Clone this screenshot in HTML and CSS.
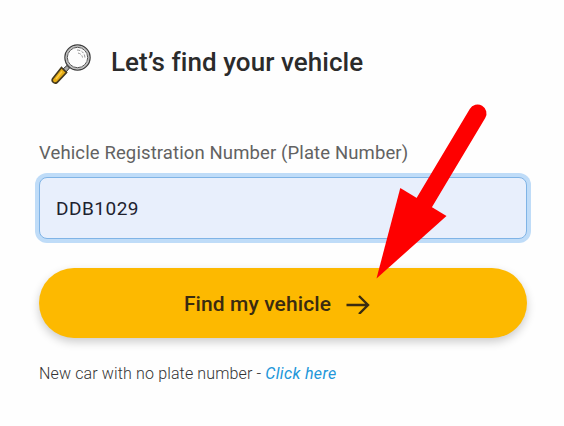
FILE: index.html
```
<!DOCTYPE html>
<html lang="en">
<head>
    <meta charset="UTF-8">
    <meta name="viewport" content="width=device-width, initial-scale=1.0">
    <title>Find my vehicle</title>
    <link rel="stylesheet" href="styles.css">
</head>
<body>

    <main class="container">
        <header class="header">
            <svg class="search-icon" width="42" height="42" viewBox="0 0 42 42">
                <path d="M12 26L15 29L18.500 25L16 22.500Z" fill="#aaa" stroke="#333" stroke-width="1"/>
                <path d="M10.500 24.500L15.500 29.500L6 39.500Q4 41 2 39Q.5 37.300 1.800 35.500Z" fill="#e5ac16" stroke="#44391e" stroke-width="1.700"/>
                <path d="M11 28.500L5 36" stroke="#ffcf45" stroke-width="1.500"/>
                <circle cx="26.500" cy="14.500" r="12.500" fill="#fff" stroke="#3b3b3b" stroke-width="1.500"/>
                <circle cx="26.500" cy="14.500" r="11.300" fill="none" stroke="#bcbcbc" stroke-width="1.400"/>
                <circle cx="26.500" cy="14.500" r="10.200" fill="#fdfdfd" stroke="#555" stroke-width="1"/>
                <path d="M26 7Q33.500 7.500 34 15M27 10Q31 11 31.500 14.500" fill="none" stroke="#888" stroke-width=".9" stroke-dasharray="3 1.500"/>
            </svg>
            <h1>Let’s find your vehicle</h1>
        </header>

        <form class="vehicle-form">
            <label class="label" for="plate">Vehicle Registration Number (Plate Number)</label>
            <input type="text" id="plate" value="DDB1029">
            <button type="button">
                <span>Find my vehicle</span>
                <svg width="24" height="20" viewBox="0 0 24 20" fill="none" stroke="#3a2b10" stroke-width="2.400">
                    <path d="M.5 11H22M13 2L22 11L13 20"/>
                </svg>
            </button>
        </form>

        <p class="new-car">New car with no plate number - <a href="#">Click here</a></p>
    </main>

    <!-- pointer laid over the form -->
    <svg class="pointer" width="564" height="426" viewBox="0 0 564 426">
        <path d="M424 203L477.500 113.500" stroke="#fe0000" stroke-width="18" stroke-linecap="round"/>
        <path d="M376.500 278.500L400.300 188L446.500 216Z" fill="#fe0000"/>
    </svg>

</body>
</html>
```

FILE: styles.css
```
* {
    box-sizing: border-box;
}
body {
    margin: 0;
    font-family: Roboto, "Liberation Sans", sans-serif;
    background-color: #fefefe;
    color: #2b2b2b;
}
.container {
    width: 488px;
    margin-left: 39px;
    padding-top: 43px;
}
.header {
    display: flex;
    align-items: center;
    height: 42px;
    padding-left: 12px;
    gap: 18px;
}
.search-icon {
    flex: none;
}
h1 {
    margin: 0 0 4px;
    font-size: 26px;
    line-height: 30px;
    font-weight: 500;
    letter-spacing: 0.06px;
    white-space: nowrap;
}
.vehicle-form {
    margin-top: 55px;
}
.label {
    display: block;
    height: 37px;
    font-size: 18.5px;
    line-height: 26px;
    letter-spacing: 0.12px;
    color: #626262;
    white-space: nowrap;
}
input {
    display: block;
    width: 100%;
    height: 62px;
    padding: 0 16px;
    border: 1px solid #80b4e6;
    border-radius: 8px;
    outline: none;
    box-shadow: 0 0 0 4px #bfdcf8;
    background-color: #e8effc;
    color: #20222f;
    font-family: inherit;
    font-size: 19px;
    letter-spacing: 0.5px;
}
button {
    display: flex;
    align-items: center;
    justify-content: center;
    gap: 15px;
    width: 100%;
    height: 70px;
    margin-top: 29px;
    padding: 1px 12px 0 0;
    border: none;
    border-radius: 35px;
    background-color: #fdb900;
    box-shadow: 0 4px 10px rgba(0, 0, 0, 0.2);
    color: #3a2b10;
    font-family: inherit;
    font-size: 21px;
    font-weight: 500;
    letter-spacing: 0.1px;
}
.new-car {
    margin: 26px 0 0;
    font-size: 16px;
    line-height: 20px;
    font-weight: 300;
    letter-spacing: 0.14px;
    color: #333;
}
.new-car a {
    color: #2196d9;
    font-weight: 400;
    font-style: italic;
    letter-spacing: 0.35px;
    text-decoration: none;
}
.pointer {
    position: absolute;
    top: 0;
    left: 0;
    pointer-events: none;
}
```
